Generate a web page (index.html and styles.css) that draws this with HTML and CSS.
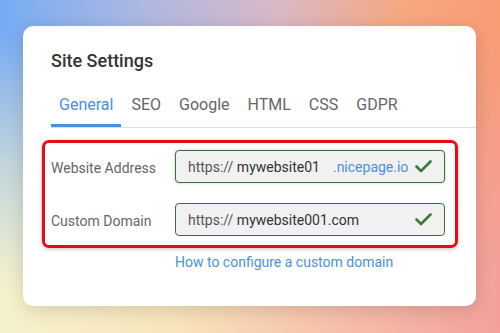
FILE: index.html
```html
<!DOCTYPE html>
<html>
<head>
<meta charset="utf-8">
<link rel="stylesheet" href="styles.css">
</head>
<body>
<div class="bg"></div>
<div class="card">
  <h1 class="title">Site Settings</h1>
  <div class="tabs">
    <div class="tab active">General</div>
    <div class="tab">SEO</div>
    <div class="tab">Google</div>
    <div class="tab">HTML</div>
    <div class="tab">CSS</div>
    <div class="tab">GDPR</div>
  </div>
  <div class="highlight">
    <div class="row">
      <div class="label">Website Address</div>
      <div class="field glow">
        <span class="proto">https://</span>&nbsp;<span class="val">mywebsite01</span><span class="suffix">.nicepage.io</span>
        <svg class="check" width="17" height="13" viewBox="0 0 17 13"><path d="M1.5 6.5 L6 11 L15.5 1.5" fill="none" stroke="#3b7a3b" stroke-width="2.6" stroke-linecap="round" stroke-linejoin="round"/></svg>
      </div>
    </div>
    <div class="row">
      <div class="label">Custom Domain</div>
      <div class="field">
        <span class="proto">https://</span>&nbsp;<span class="val">mywebsite001.com</span>
        <svg class="check" width="17" height="13" viewBox="0 0 17 13"><path d="M1.5 6.5 L6 11 L15.5 1.5" fill="none" stroke="#3b7a3b" stroke-width="2.6" stroke-linecap="round" stroke-linejoin="round"/></svg>
      </div>
    </div>
  </div>
  <a class="link">How to configure a custom domain</a>
</div>
</body>
</html>
```
FILE: styles.css
```css
html, body {
  margin: 0;
  padding: 0;
}
body {
  width: 500px;
  height: 333px;
  overflow: hidden;
  position: relative;
  font-family: Roboto, "Liberation Sans", sans-serif;
  background: linear-gradient(90deg, #76acf4 0%, #b0b8e0 30%, #d8b8c8 55%, #f6a880 80%, #f89c74 100%);
}
.bg {
  position: absolute;
  inset: 0;
  background: linear-gradient(90deg, #f6f2cc 0%, #f8e4bc 35%, #f6bca8 70%, #f3a09c 100%);
  -webkit-mask-image: linear-gradient(to bottom, transparent 10%, rgba(0,0,0,0.6) 50%, #000 88%);
  mask-image: linear-gradient(to bottom, transparent 10%, rgba(0,0,0,0.6) 50%, #000 88%);
}
.card {
  position: relative;
  margin: 26px 0 0 23px;
  width: 453px;
  height: 280px;
  box-sizing: border-box;
  padding: 25px 0 0 28px;
  background: #fff;
  border-radius: 10px;
  box-shadow: 0 4px 18px rgba(0, 0, 0, 0.14);
}
.title {
  margin: 0;
  font-size: 18px;
  line-height: 20px;
  font-weight: 500;
  color: #333;
}
.tabs {
  display: flex;
  gap: 2px;
  margin-top: 24px;
  border-bottom: 1px solid #dedede;
}
.tab {
  padding: 0 8px 9px;
  font-size: 16px;
  line-height: 20px;
  color: #666;
  border-bottom: 3px solid transparent;
}
.tab.active {
  color: #4a90e2;
  border-bottom-color: #4a90e2;
}
.highlight {
  margin: 12px 0 0 -9px;
  width: 416px;
  box-sizing: border-box;
  border: 3px solid #e80c12;
  border-radius: 7px;
  padding: 7px 10px 9px 6px;
  display: flex;
  flex-direction: column;
  gap: 20px;
  box-shadow: 0 1px 4px rgba(0, 0, 0, 0.25);
}
.row {
  display: grid;
  grid-template-columns: 124px 270px;
  align-items: center;
}
.label {
  font-size: 14px;
  color: #666;
  padding-top: 3px;
}
.field {
  height: 33px;
  box-sizing: border-box;
  border: 1px solid #3e6e3e;
  border-radius: 4px;
  background: #f1f1f1;
  display: flex;
  align-items: center;
  padding: 0 12px 0 12px;
  font-size: 14px;
  white-space: nowrap;
}
.field.glow {
  box-shadow: 0 0 3px rgba(80, 160, 80, 0.45);
}
.proto {
  color: #555;
}
.val {
  color: #333;
}
.suffix {
  color: #4a90e2;
  margin-left: 13px;
}
.check {
  margin-left: auto;
  flex-shrink: 0;
}
.link {
  display: block;
  margin: 6px 0 0 124px;
  font-size: 14px;
  line-height: 16px;
  color: #4a90e2;
}
```
